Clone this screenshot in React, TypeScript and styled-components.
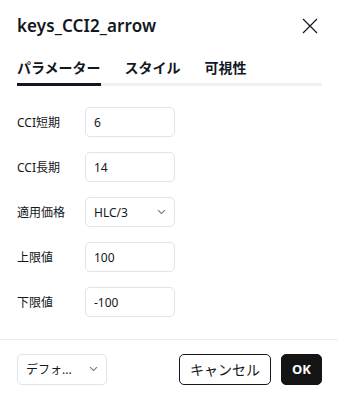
import styled, { createGlobalStyle } from 'styled-components';

const GlobalStyle = createGlobalStyle`
  html, body {
    margin: 0;
    padding: 0;
    background: #ffffff;
  }
  body {
    font-family: "Noto Sans", "Noto Sans CJK JP", sans-serif;
    color: #131722;
  }
`;

const Dialog = styled.div`
  width: 338px;
  height: 398px;
  display: flex;
  flex-direction: column;
  box-sizing: border-box;
`;

const Header = styled.div`
  display: flex;
  align-items: center;
  justify-content: space-between;
  height: 51px;
  padding: 0 20px 0 17px;
`;

const Title = styled.h1`
  margin: 0;
  font-size: 17px;
  font-weight: 600;
  letter-spacing: 0.1px;
`;

const CloseButton = styled.button`
  border: none;
  background: none;
  padding: 0;
  width: 16px;
  height: 16px;
  display: flex;
  align-items: center;
  justify-content: center;
  cursor: pointer;
  color: #131722;
`;

const Tabs = styled.div`
  margin: 0 16px 0 17px;
  display: flex;
  gap: 24px;
  border-bottom: 3px solid #f0f0f0;
`;

const Tab = styled.div<{ $active?: boolean }>`
  font-size: 14px;
  font-weight: 700;
  padding: 6px 0 6px;
  margin-bottom: -3px;
  border-bottom: 3px solid ${p => (p.$active ? '#131722' : 'transparent')};
  color: #131722;
`;

const Body = styled.div`
  flex: 1;
  display: flex;
  flex-direction: column;
  gap: 15px;
  padding: 21px 17px 0;
`;

const Row = styled.div`
  display: flex;
  align-items: center;
`;

const Label = styled.div`
  width: 68px;
  font-size: 12px;
  color: #131722;
`;

const Field = styled.div`
  width: 90px;
  height: 30px;
  box-sizing: border-box;
  border: 1px solid #e0e3eb;
  border-radius: 5px;
  display: flex;
  align-items: center;
  padding: 0 8px;
  font-size: 12px;
  justify-content: space-between;
`;

const Chevron = styled.svg`
  width: 9px;
  height: 6px;
  color: #787b86;
`;

const Footer = styled.div`
  height: 58px;
  border-top: 1px solid #ecedf0;
  display: flex;
  align-items: center;
  padding: 0 16px 0 17px;
`;

const PresetSelect = styled.div`
  width: 90px;
  height: 31px;
  box-sizing: border-box;
  border: 1px solid #e0e3eb;
  border-radius: 5px;
  display: flex;
  align-items: center;
  justify-content: space-between;
  padding: 0 8px;
  font-size: 12px;
`;

const Spacer = styled.div`
  flex: 1;
`;

const Button = styled.button<{ $primary?: boolean }>`
  height: 31px;
  box-sizing: border-box;
  border-radius: 5px;
  font-family: "Noto Sans", "Noto Sans CJK JP", sans-serif;
  cursor: pointer;
  border: 1px solid ${p => (p.$primary ? '#141414' : '#131722')};
  background: ${p => (p.$primary ? '#141414' : '#ffffff')};
  color: ${p => (p.$primary ? '#ffffff' : '#131722')};
  font-size: ${p => (p.$primary ? '13px' : '14px')};
  font-weight: ${p => (p.$primary ? 700 : 400)};
  padding: 0 10px;
  margin-left: ${p => (p.$primary ? '10px' : '0')};
`;

function ChevronDown() {
  return (
    <Chevron viewBox="0 0 9 6" fill="none">
      <path d="M1 1.2l3.5 3.3L8 1.2" stroke="currentColor" strokeWidth="1.1" />
    </Chevron>
  );
}

const params = [
  { label: 'CCI短期', value: '6' },
  { label: 'CCI長期', value: '14' },
  { label: '適用価格', value: 'HLC/3', select: true },
  { label: '上限値', value: '100' },
  { label: '下限値', value: '-100' },
];

export default function App() {
  return (
    <>
      <GlobalStyle />
      <Dialog>
        <Header>
          <Title>keys_CCI2_arrow</Title>
          <CloseButton aria-label="close">
            <svg width="16" height="16" viewBox="0 0 16 16" fill="none">
              <path d="M1 1l14 14M15 1L1 15" stroke="currentColor" strokeWidth="1.2" />
            </svg>
          </CloseButton>
        </Header>
        <Tabs>
          <Tab $active>パラメーター</Tab>
          <Tab>スタイル</Tab>
          <Tab>可視性</Tab>
        </Tabs>
        <Body>
          {params.map(p => (
            <Row key={p.label}>
              <Label>{p.label}</Label>
              <Field>
                <span>{p.value}</span>
                {p.select && <ChevronDown />}
              </Field>
            </Row>
          ))}
        </Body>
        <Footer>
          <PresetSelect>
            <span>デフォ...</span>
            <ChevronDown />
          </PresetSelect>
          <Spacer />
          <Button>キャンセル</Button>
          <Button $primary>OK</Button>
        </Footer>
      </Dialog>
    </>
  );
}
